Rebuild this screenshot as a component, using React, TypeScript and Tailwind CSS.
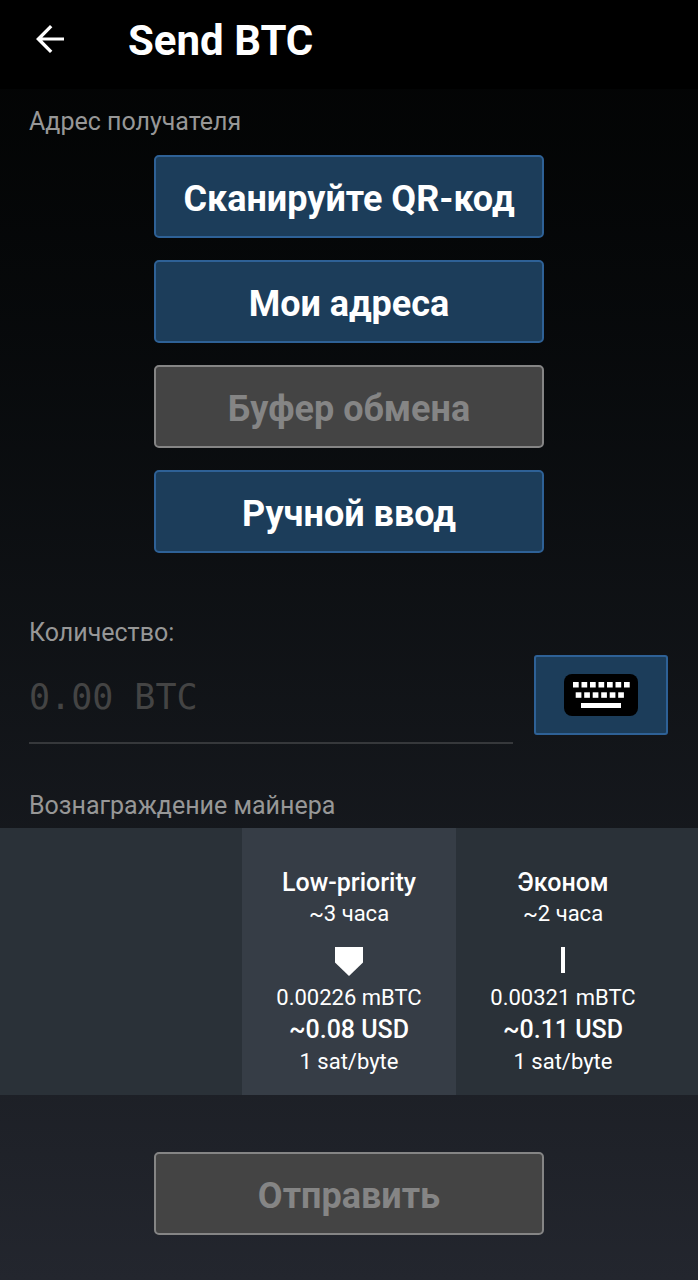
import { useState } from "react";
import clsx from "clsx";

type Fee = {
  id: string;
  name: string;
  time: string;
  amount: string;
  fiat: string;
  rate: string;
};

const FEES: Fee[] = [
  { id: "low", name: "Low-priority", time: "~3 часа", amount: "0.00226 mBTC", fiat: "~0.08 USD", rate: "1 sat/byte" },
  { id: "economy", name: "Эконом", time: "~2 часа", amount: "0.00321 mBTC", fiat: "~0.11 USD", rate: "1 sat/byte" },
];

const ADDRESS_SOURCES = [
  { label: "Сканируйте QR-код", disabled: false },
  { label: "Мои адреса", disabled: false },
  { label: "Буфер обмена", disabled: true },
  { label: "Ручной ввод", disabled: false },
];

function WideButton({ label, disabled }: { label: string; disabled?: boolean }) {
  return (
    <button
      type="button"
      disabled={disabled}
      className={clsx(
        "h-[83px] w-[56%] rounded-[5px] border-2 pt-1 text-4xl font-bold",
        disabled
          ? "border-[#858585] bg-[#444444] text-[#858585]"
          : "border-[#2e6196] bg-[#1c3d5a] text-white"
      )}
    >
      {label}
    </button>
  );
}

function BackIcon() {
  return (
    <svg viewBox="0 0 24 24" className="size-[42px]" fill="currentColor" aria-hidden="true">
      <path d="M20 11.1H7.6l5.75-5.75L12 4l-8 8 8 8 1.35-1.35L7.6 12.9H20z" />
    </svg>
  );
}

function KeyboardIcon() {
  return (
    <svg viewBox="0 0 74 42" className="h-[42px] w-[74px]" aria-hidden="true">
      <rect width="74" height="42" rx="8" fill="#000" />
      <g fill="#fff">
        {[0, 1, 2, 3, 4, 5, 6].map((i) => (
          <rect key={i} x={9 + i * 8.5} y="8" width="5.7" height="5.5" />
        ))}
        {[0, 1, 2, 3, 4, 5].map((i) => (
          <rect key={i} x={11.7 + i * 8.5} y="18.3" width="5.7" height="5.5" />
        ))}
        <rect x="17" y="29" width="40" height="5" />
      </g>
    </svg>
  );
}

function FeeMarker({ selected }: { selected: boolean }) {
  return (
    <svg viewBox="0 0 28 29" className="mt-[18px] h-[29px] w-7" fill="#fff" aria-hidden="true">
      {selected ? <path d="M0 0h28v15.5L14 29 0 15.5z" /> : <rect x="12" width="4" height="26" />}
    </svg>
  );
}

export default function App() {
  const [amount, setAmount] = useState("");
  const [feeId, setFeeId] = useState("low");

  return (
    <div className="flex min-h-screen flex-col bg-linear-to-b from-[#020303] to-[#23262e] font-[Roboto,'Liberation_Sans',sans-serif] text-white">
      <header className="flex h-[89px] items-start gap-[57px] bg-black pt-[18px] pl-[29px]">
        <button type="button" aria-label="Назад">
          <BackIcon />
        </button>
        <h1 className="text-[42px] leading-[46px] font-bold">Send BTC</h1>
      </header>

      <main className="flex flex-col">
        <section className="pt-[18px]">
          <h2 className="pl-[29px] text-[25px] leading-[30px] text-[#979797]">Адрес получателя</h2>
          <div className="mt-[18px] flex flex-col items-center gap-[22px]">
            {ADDRESS_SOURCES.map((s) => (
              <WideButton key={s.label} label={s.label} disabled={s.disabled} />
            ))}
          </div>
        </section>

        <section className="mt-[65px] pr-[30px] pl-[29px]">
          <label htmlFor="amount" className="block text-[25px] leading-[30px] text-[#979797]">
            Количество:
          </label>
          <div className="mt-[7px] flex items-start gap-[21px]">
            <input
              id="amount"
              type="text"
              inputMode="decimal"
              value={amount}
              onChange={(e) => setAmount(e.target.value)}
              placeholder="0.00 BTC"
              className="h-[89px] min-w-0 flex-1 border-b-2 border-[#36383b] bg-transparent pb-1 font-['DejaVu_Sans_Mono',monospace] text-[35px] outline-none placeholder:text-[#444444]"
            />
            <button
              type="button"
              aria-label="Клавиатура"
              className="flex h-20 w-[134px] items-center justify-center rounded-[3px] border-2 border-[#2e6196] bg-[#1c3d5a]"
            >
              <KeyboardIcon />
            </button>
          </div>
        </section>

        <section className="mt-[47px]">
          <h2 className="pl-[29px] text-[25px] leading-[30px] text-[#979797]">Вознаграждение майнера</h2>
          <div className="mt-[7px] grid grid-cols-[1fr_214px_1fr] bg-[#2a3138]">
            {FEES.map((fee) => (
              <button
                key={fee.id}
                type="button"
                aria-pressed={fee.id === feeId}
                onClick={() => setFeeId(fee.id)}
                className={clsx(
                  "flex w-[214px] flex-col items-center pt-[39px] pb-[18px] text-[22px] leading-[30px] first:col-start-2",
                  fee.id === feeId && "bg-[#363d46]"
                )}
              >
                <span className="text-[25px] leading-8 font-medium">{fee.name}</span>
                <span>{fee.time}</span>
                <FeeMarker selected={fee.id === feeId} />
                <span className="mt-[7px]">{fee.amount}</span>
                <span className="text-[25px] leading-[34px] font-medium">{fee.fiat}</span>
                <span>{fee.rate}</span>
              </button>
            ))}
          </div>
        </section>

        <div className="mt-[57px] mb-[45px] flex justify-center">
          <WideButton label="Отправить" disabled />
        </div>
      </main>
    </div>
  );
}
